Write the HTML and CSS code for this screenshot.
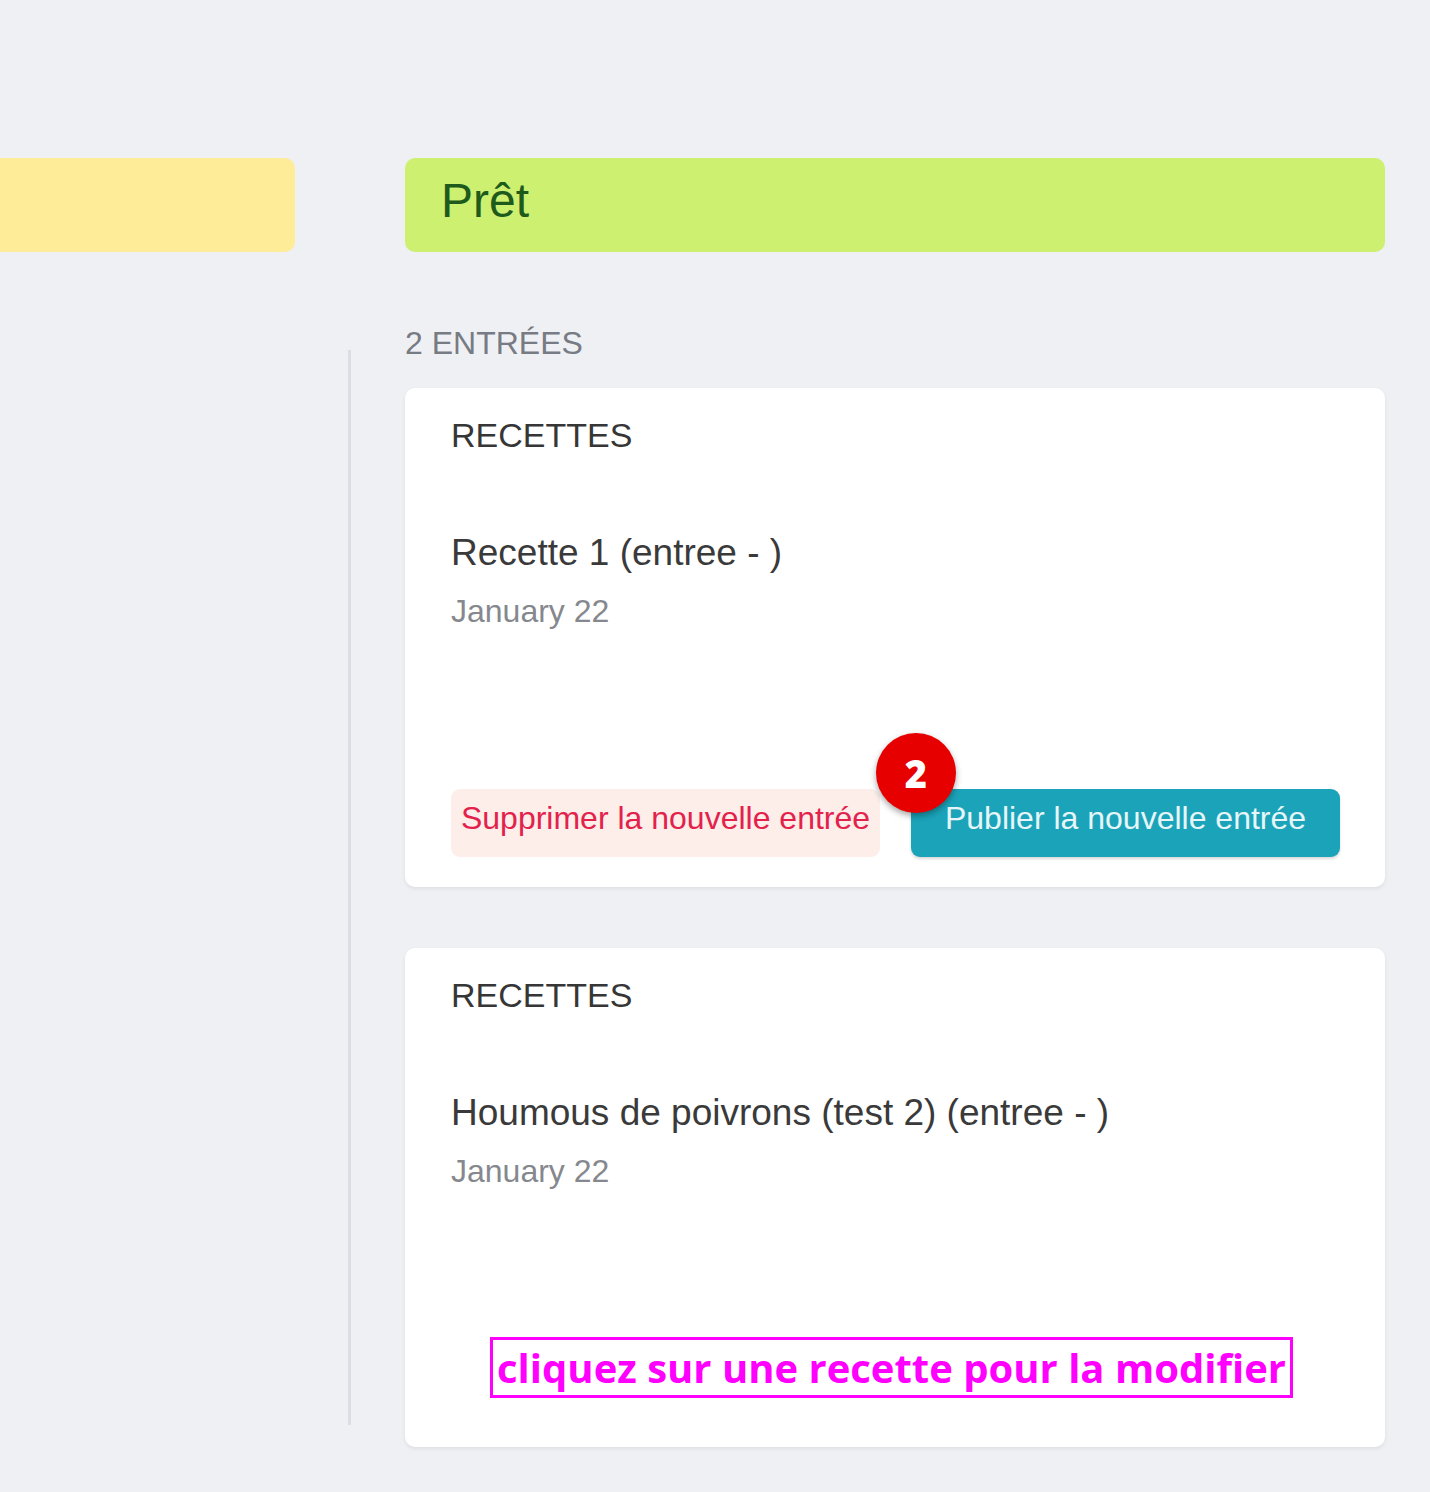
FILE: index.html
```html
<!DOCTYPE html>
<html lang="fr">
<head>
<meta charset="utf-8">
<title>Tableau</title>
<link rel="stylesheet" href="styles.css">
</head>
<body>
<div class="board">
  <div class="column column-left">
    <div class="col-header header-yellow"></div>
  </div>
  <div class="divider"><div class="divider-line"></div></div>
  <div class="column column-right">
    <div class="col-header header-green"><span class="col-title">Prêt</span></div>
    <div class="count">2 ENTRÉES</div>
    <div class="card">
      <div class="card-type">RECETTES</div>
      <div class="card-title">Recette 1 (entree - )</div>
      <div class="card-date">January 22</div>
      <div class="card-actions">
        <button class="btn btn-delete">Supprimer la nouvelle entrée</button>
        <button class="btn btn-publish">Publier la nouvelle entrée<span class="badge">2</span></button>
      </div>
    </div>
    <div class="card card-second">
      <div class="card-type">RECETTES</div>
      <div class="card-title">Houmous de poivrons (test 2) (entree - )</div>
      <div class="card-date">January 22</div>
      <div class="hint">cliquez sur une recette pour la modifier</div>
    </div>
  </div>
</div>
</body>
</html>
```

FILE: styles.css
```css
* { box-sizing: border-box; }
html, body {
  margin: 0;
  padding: 0;
  background: #eff0f4;
  font-family: "Liberation Sans", Arial, sans-serif;
}
.board {
  display: flex;
  align-items: flex-start;
  padding-top: 158px;
  min-height: 1492px;
}
.column-left { width: 295px; }
.column-right { width: 980px; }
.col-header {
  height: 94px;
  border-radius: 10px;
  display: flex;
  align-items: center;
}
.header-yellow {
  background: #feec98;
  border-radius: 0 10px 10px 0;
}
.header-green {
  background: #cdf070;
  padding-left: 36px;
}
.col-title {
  font-size: 48px;
  color: #1e5a1c;
  line-height: 1;
  margin-top: -9px;
}
.divider {
  width: 110px;
  display: flex;
  justify-content: center;
  padding-top: 192px;
}
.divider-line {
  width: 3px;
  height: 1075px;
  background: #dcdde2;
  margin-left: -2px;
}
.count {
  margin-top: 71px;
  height: 40px;
  line-height: 40px;
  font-size: 32px;
  color: #777b83;
  margin-bottom: 25px;
}
.card {
  background: #ffffff;
  border-radius: 10px;
  box-shadow: 0 2px 4px rgba(0, 0, 0, 0.07);
  padding: 27px 45px 30px 46px;
  height: 499px;
}
.card-second { margin-top: 61px; padding-bottom: 49px; }
.card-type {
  height: 40px;
  line-height: 40px;
  font-size: 34px;
  color: #363636;
}
.card-title {
  margin-top: 76px;
  height: 44px;
  line-height: 44px;
  font-size: 37px;
  color: #3a3a3a;
}
.card-date {
  margin-top: 16px;
  height: 40px;
  line-height: 40px;
  font-size: 32px;
  color: #85888e;
}
.card-actions {
  margin-top: 158px;
  display: flex;
  gap: 31px;
}
.btn {
  flex: 1;
  height: 68px;
  border: none;
  border-radius: 9px;
  font-family: "Liberation Sans", Arial, sans-serif;
  font-size: 32px;
  padding: 0 0 9px 0;
  position: relative;
  cursor: pointer;
}
.btn-delete {
  background: #fdeeea;
  color: #e3224c;
}
.btn-publish {
  background: #1ba3b9;
  color: #e6f6f8;
  box-shadow: 0 2px 3px rgba(0, 0, 0, 0.15);
}
.badge {
  position: absolute;
  left: -35px;
  top: -56px;
  width: 80px;
  height: 80px;
  border-radius: 50%;
  background: #e60000;
  color: #ffffff;
  font-family: "Open Sans", "Liberation Sans", sans-serif;
  font-weight: 800;
  font-size: 38px;
  line-height: 80px;
  text-align: center;
  box-shadow: 0 3px 6px rgba(0, 0, 0, 0.35);
}
.hint {
  margin-top: 146px;
  margin-left: 39px;
  display: inline-block;
  height: 61px;
  width: 803px;
  border: 3px solid #ff00ff;
  color: #ff00ff;
  font-family: "Open Sans", sans-serif;
  font-weight: 700;
  font-size: 40px;
  line-height: 55px;
  text-align: center;
  white-space: nowrap;
}
```
